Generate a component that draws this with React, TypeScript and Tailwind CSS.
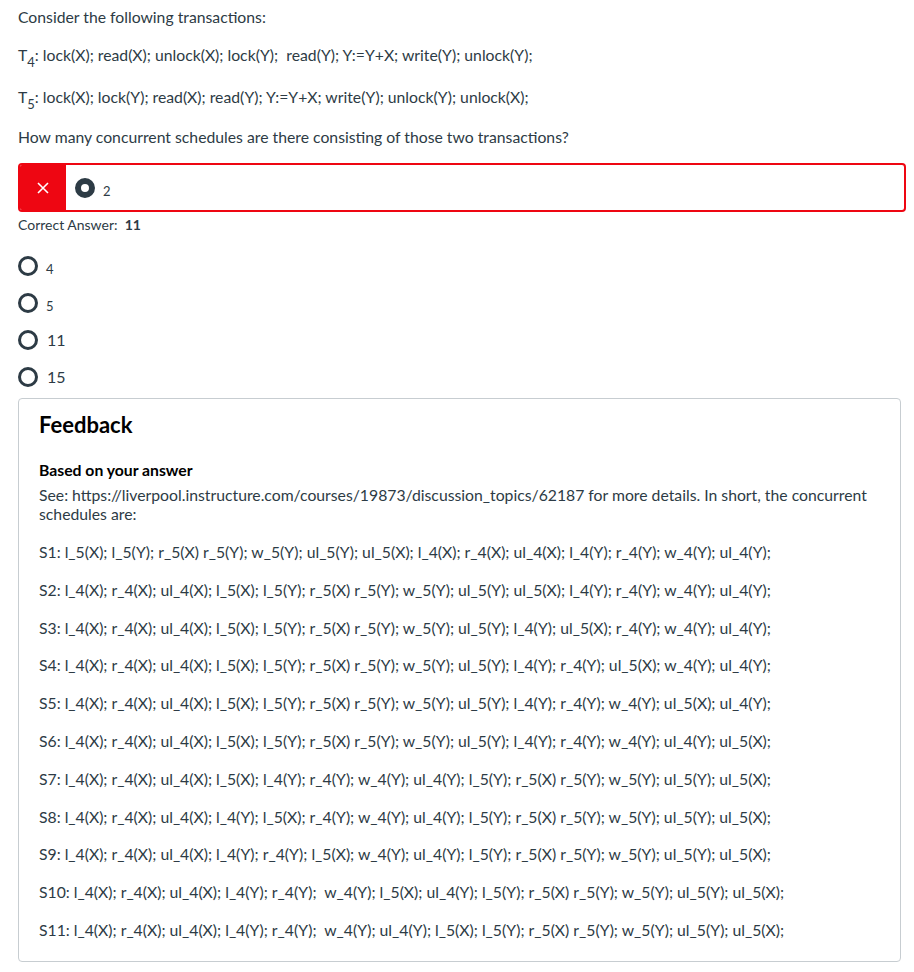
import React from "react";

const schedules = [
  "S1: l_5(X); l_5(Y); r_5(X) r_5(Y); w_5(Y); ul_5(Y); ul_5(X); l_4(X); r_4(X); ul_4(X); l_4(Y); r_4(Y); w_4(Y); ul_4(Y);",
  "S2: l_4(X); r_4(X); ul_4(X); l_5(X); l_5(Y); r_5(X) r_5(Y); w_5(Y); ul_5(Y); ul_5(X); l_4(Y); r_4(Y); w_4(Y); ul_4(Y);",
  "S3: l_4(X); r_4(X); ul_4(X); l_5(X); l_5(Y); r_5(X) r_5(Y); w_5(Y); ul_5(Y); l_4(Y); ul_5(X); r_4(Y); w_4(Y); ul_4(Y);",
  "S4: l_4(X); r_4(X); ul_4(X); l_5(X); l_5(Y); r_5(X) r_5(Y); w_5(Y); ul_5(Y); l_4(Y); r_4(Y); ul_5(X); w_4(Y); ul_4(Y);",
  "S5: l_4(X); r_4(X); ul_4(X); l_5(X); l_5(Y); r_5(X) r_5(Y); w_5(Y); ul_5(Y); l_4(Y); r_4(Y); w_4(Y); ul_5(X); ul_4(Y);",
  "S6: l_4(X); r_4(X); ul_4(X); l_5(X); l_5(Y); r_5(X) r_5(Y); w_5(Y); ul_5(Y); l_4(Y); r_4(Y); w_4(Y); ul_4(Y); ul_5(X);",
  "S7: l_4(X); r_4(X); ul_4(X); l_5(X); l_4(Y); r_4(Y); w_4(Y); ul_4(Y); l_5(Y); r_5(X) r_5(Y); w_5(Y); ul_5(Y); ul_5(X);",
  "S8: l_4(X); r_4(X); ul_4(X); l_4(Y); l_5(X); r_4(Y); w_4(Y); ul_4(Y); l_5(Y); r_5(X) r_5(Y); w_5(Y); ul_5(Y); ul_5(X);",
  "S9: l_4(X); r_4(X); ul_4(X); l_4(Y); r_4(Y); l_5(X); w_4(Y); ul_4(Y); l_5(Y); r_5(X) r_5(Y); w_5(Y); ul_5(Y); ul_5(X);",
  "S10: l_4(X); r_4(X); ul_4(X); l_4(Y); r_4(Y);  w_4(Y); l_5(X); ul_4(Y); l_5(Y); r_5(X) r_5(Y); w_5(Y); ul_5(Y); ul_5(X);",
  "S11: l_4(X); r_4(X); ul_4(X); l_4(Y); r_4(Y);  w_4(Y); ul_4(Y); l_5(X); l_5(Y); r_5(X) r_5(Y); w_5(Y); ul_5(Y); ul_5(X);",
];

function Radio({ selected }: { selected?: boolean }) {
  return selected ? (
    <span className="inline-block w-[20px] h-[20px] rounded-full border-[6px] border-[#2d3b45] bg-white shrink-0" />
  ) : (
    <span className="inline-block w-[20px] h-[20px] rounded-full border-[3px] border-[#2d3b45] bg-white shrink-0" />
  );
}

export default function App() {
  return (
    <div
      className="w-[914px] h-[972px] bg-white text-[#2d3b45] text-[15.75px] leading-[20px] overflow-hidden"
      style={{ fontFamily: "Lato, 'Noto Sans', sans-serif" }}
    >
      <div className="pl-[18px] pr-[10px] pt-[7px]">
        <p>Consider the following transactions:</p>
        <p className="mt-[18px]">
          T<sub className="text-[13px] align-[-3px]">4</sub>: lock(X); read(X); unlock(X); lock(Y);&nbsp; read(Y); Y:=Y+X; write(Y); unlock(Y);
        </p>
        <p className="mt-[22px]">
          T<sub className="text-[13px] align-[-3px]">5</sub>: lock(X); lock(Y); read(X); read(Y); Y:=Y+X; write(Y); unlock(Y); unlock(X);
        </p>
        <p className="mt-[20px]">How many concurrent schedules are there consisting of those two transactions?</p>

        <div className="mt-[16px] mr-[-2px] flex h-[49px] rounded-[4px] border-[2px] border-[#ee0612] overflow-hidden">
          <div className="w-[46px] bg-[#ee0612] flex items-center justify-center text-white">
            <svg width="12" height="12" viewBox="0 0 12 12">
              <path d="M1 1 L11 11 M11 1 L1 11" stroke="white" strokeWidth="1.6" />
            </svg>
          </div>
          <div className="flex items-center pl-[9px]">
            <Radio selected />
            <span className="ml-[8px] mt-[6px] text-[13px]">2</span>
          </div>
        </div>
        <div className="mt-[3px] text-[14px] leading-[20px]">
          Correct Answer:&nbsp; <span className="font-bold">11</span>
        </div>

        <div className="mt-[21px] flex flex-col gap-[17px]">
          <div className="flex items-center h-[20px]">
            <Radio />
            <span className="ml-[8px] mt-[6px] text-[13px]">4</span>
          </div>
          <div className="flex items-center h-[20px]">
            <Radio />
            <span className="ml-[8px] mt-[6px] text-[13px]">5</span>
          </div>
          <div className="flex items-center h-[20px]">
            <Radio />
            <span className="ml-[9px] text-[16px]">11</span>
          </div>
          <div className="flex items-center h-[20px]">
            <Radio />
            <span className="ml-[9px] text-[16px]">15</span>
          </div>
        </div>

        <div className="mt-[11px] mr-[3px] border border-[#c7cdd1] rounded-[4px] pl-[20px] pr-[20px] pt-[12px] pb-[21px]">
          <h2 className="text-[22px] leading-[28px] font-bold text-black">Feedback</h2>
          <h4 className="mt-[21px] font-bold text-black">Based on your answer</h4>
          <p className="mt-[5px] leading-[19px]">
            See: https://liverpool.instructure.com/courses/19873/discussion_topics/62187 for more details. In short, the concurrent schedules are:
          </p>
          <div className="mt-[19px] flex flex-col gap-[17.8px]">
            {schedules.map((s) => (
              <p key={s} className="whitespace-pre">{s}</p>
            ))}
          </div>
        </div>
      </div>
    </div>
  );
}
